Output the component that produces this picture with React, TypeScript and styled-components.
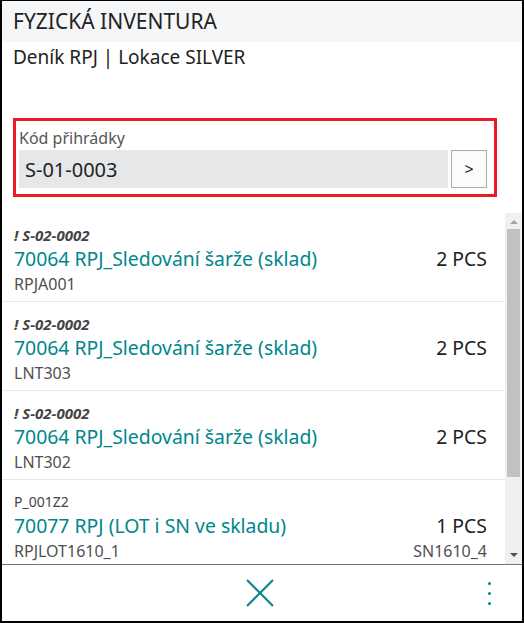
import React from 'react'
import styled, { createGlobalStyle } from 'styled-components'

const teal = '#00878c'

const GlobalStyle = createGlobalStyle`
  html, body {
    margin: 0;
    padding: 0;
    background: #fff;
  }
  * {
    box-sizing: border-box;
  }
`

type Entry = {
  bin: string
  warning: boolean
  item: string
  qty: string
  lot: string
  serial?: string
}

const entries: Entry[] = [
  { bin: '! S-02-0002', warning: true, item: '70064 RPJ_Sledování šarže (sklad)', qty: '2 PCS', lot: 'RPJA001' },
  { bin: '! S-02-0002', warning: true, item: '70064 RPJ_Sledování šarže (sklad)', qty: '2 PCS', lot: 'LNT303' },
  { bin: '! S-02-0002', warning: true, item: '70064 RPJ_Sledování šarže (sklad)', qty: '2 PCS', lot: 'LNT302' },
  { bin: 'P_001Z2', warning: false, item: '70077 RPJ (LOT i SN ve skladu)', qty: '1 PCS', lot: 'RPJLOT1610_1', serial: 'SN1610_4' },
]

export default function App() {
  return (
    <>
      <GlobalStyle />
      <Frame>
        <Header>FYZICKÁ INVENTURA</Header>
        <Subtitle>Deník RPJ | Lokace SILVER</Subtitle>

        <BinField>
          <FieldLabel>Kód přihrádky</FieldLabel>
          <InputRow>
            <BinInput defaultValue="S-01-0003" />
            <GoButton>&gt;</GoButton>
          </InputRow>
        </BinField>

        <ListArea>
          <List>
            {entries.map((e, i) => (
              <Row key={i}>
                <BinCode $warning={e.warning}>{e.bin}</BinCode>
                <Line>
                  <ItemName>{e.item}</ItemName>
                  <Qty>{e.qty}</Qty>
                </Line>
                <Line>
                  <Lot>{e.lot}</Lot>
                  {e.serial && <Lot>{e.serial}</Lot>}
                </Line>
              </Row>
            ))}
          </List>
          <Scrollbar>
            <ArrowUp />
            <Track>
              <Thumb />
            </Track>
            <ArrowDown />
          </Scrollbar>
        </ListArea>

        <Footer>
          <span />
          <CloseButton aria-label="Zavřít">
            <svg width="28" height="28" viewBox="0 0 28 28">
              <path d="M1 1 L27 27 M27 1 L1 27" stroke={teal} strokeWidth="2" fill="none" />
            </svg>
          </CloseButton>
          <MoreButton aria-label="Další">
            <Dot />
            <Dot />
            <Dot />
          </MoreButton>
        </Footer>
      </Frame>
    </>
  )
}

const Frame = styled.div`
  width: 524px;
  height: 623px;
  border: 2px solid #000;
  border-top-width: 1px;
  display: flex;
  flex-direction: column;
  font-family: 'Noto Sans', 'Open Sans', sans-serif;
  color: #222;
  overflow: hidden;
`

const Header = styled.div`
  height: 41px;
  line-height: 41px;
  padding-left: 11px;
  background: #f5f6f8;
  font-size: 21px;
`

const Subtitle = styled.div`
  height: 30px;
  line-height: 30px;
  padding-left: 11px;
  font-size: 19px;
`

const BinField = styled.div`
  margin: 46px 25px 0 11px;
  border: 3px solid #e81c24;
  padding: 6px 7px 6px 3px;
`

const FieldLabel = styled.div`
  font-size: 16px;
  line-height: 23px;
  color: #555;
`

const InputRow = styled.div`
  display: flex;
  gap: 3px;
  height: 38px;
`

const BinInput = styled.input`
  flex: 1;
  min-width: 0;
  border: none;
  outline: none;
  background: #e6e7e8;
  padding: 0 6px;
  font-family: inherit;
  font-size: 20px;
  color: #222;
`

const GoButton = styled.button`
  width: 36px;
  border: 1px solid #acacac;
  background: #fbfbfb;
  font-family: inherit;
  font-size: 16px;
  color: #222;
  padding: 0;
`

const ListArea = styled.div`
  margin-top: 16px;
  height: 352px;
  display: flex;
  border-bottom: 1px solid #777;
`

const List = styled.div`
  flex: 1;
  overflow: hidden;
`

const Row = styled.div`
  padding: 13px 18px 7px 12px;
  border-bottom: 1px solid #e8e8e8;
`

const BinCode = styled.div<{ $warning: boolean }>`
  height: 18px;
  line-height: 18px;
  font-size: ${p => (p.$warning ? '15px' : '14px')};
  font-weight: ${p => (p.$warning ? 700 : 400)};
  font-style: ${p => (p.$warning ? 'italic' : 'normal')};
  color: #444;
`

const Line = styled.div`
  display: flex;
  justify-content: space-between;
  align-items: baseline;
  margin-top: 3px;
`

const ItemName = styled.div`
  font-size: 19.4px;
  line-height: 24px;
  color: ${teal};
`

const Qty = styled.div`
  font-size: 19.4px;
  line-height: 24px;
  color: #222;
`

const Lot = styled.div`
  font-size: 16px;
  line-height: 20px;
  color: #505050;
`

const Scrollbar = styled.div`
  width: 17px;
  background: #f0f0f0;
  display: flex;
  flex-direction: column;
  align-items: center;
`

const ArrowUp = styled.div`
  margin: 7px 0 5px;
  width: 0;
  height: 0;
  border-left: 4px solid transparent;
  border-right: 4px solid transparent;
  border-bottom: 4px solid #a3a3a3;
`

const Track = styled.div`
  flex: 1;
  width: 100%;
  padding: 0 2px;
`

const Thumb = styled.div`
  height: 248px;
  background: #c1c1c1;
`

const ArrowDown = styled.div`
  margin: 5px 0 7px;
  width: 0;
  height: 0;
  border-left: 4px solid transparent;
  border-right: 4px solid transparent;
  border-top: 4px solid #505050;
`

const Footer = styled.div`
  flex: 1;
  display: grid;
  grid-template-columns: 1fr auto 1fr;
  align-items: center;
`

const CloseButton = styled.button`
  border: none;
  background: none;
  padding: 0;
  margin-right: 4px;
  display: flex;
`

const MoreButton = styled.button`
  justify-self: end;
  margin-right: 31px;
  border: none;
  background: none;
  padding: 0;
  display: flex;
  flex-direction: column;
  gap: 7px;
`

const Dot = styled.span`
  width: 3px;
  height: 3px;
  border-radius: 50%;
  background: ${teal};
`
